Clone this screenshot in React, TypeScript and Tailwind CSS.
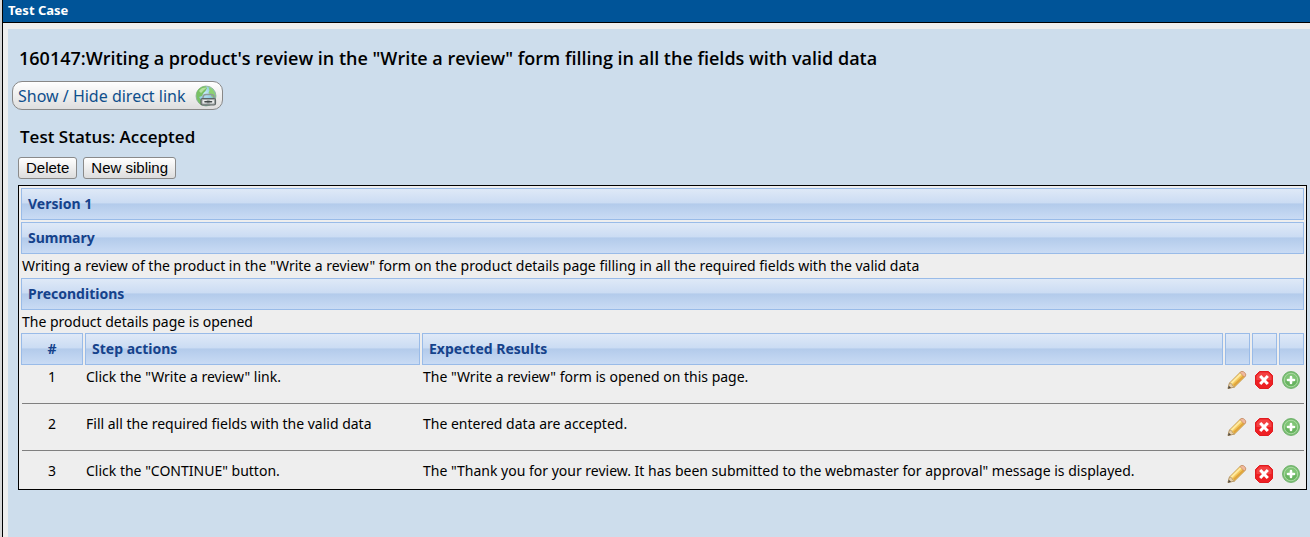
import React from "react";

const steps = [
  { action: 'Click the "Write a review" link.', expected: 'The "Write a review" form is opened on this page.' },
  { action: "Fill all the required fields with the valid data", expected: "The entered data are accepted." },
  {
    action: 'Click the "CONTINUE" button.',
    expected:
      'The "Thank you for your review. It has been submitted to the webmaster for approval" message is displayed.',
  },
];

const band =
  "h-8 border border-[#99bbe8] bg-[linear-gradient(to_bottom,#dfe9f7_0%,#cbdcf3_46%,#b3cbeb_50%,#c9dbf4_100%)] text-[#15428b] text-sm font-bold font-['Noto_Sans',sans-serif]";

function GlobeLinkIcon() {
  return (
    <svg width="22" height="22" viewBox="0 0 22 22" aria-hidden="true">
      <defs>
        <radialGradient id="globe" cx="45%" cy="35%" r="65%">
          <stop offset="0" stopColor="#c9ecf7" />
          <stop offset="0.65" stopColor="#84c4de" />
          <stop offset="1" stopColor="#5b9db4" />
        </radialGradient>
      </defs>
      <circle cx="11" cy="11" r="10" fill="url(#globe)" stroke="#8fb08c" strokeWidth="0.8" />
      <path d="M1.500 9C2 5 5.500 1.500 10.500 1.300L12 3l-1.500 3-2 2-1.500 3-3 1 2 3 .5 5C3.500 18 1 13.500 1.500 9Z" fill="#79c163" />
      <path d="M13.500 2c4 1 7 5 6.800 10l-3.300.5-1.500-3-2-1.500 1-2.500Z" fill="#8ed272" />
      <path d="M4 6c2-3 5-4 8-3.500L9 5 6 8Z" fill="#c4eab0" opacity="0.8" />
      <path d="M8 13.500V12.500a3 3 0 0 1 3-3h5a3 3 0 0 1 3 3v1" fill="none" stroke="#8f9a9a" strokeWidth="1.500" />
      <rect x="6" y="13.500" width="14.500" height="6.500" rx="1.500" fill="#a5abab" stroke="#5d6565" strokeWidth="1.200" />
      <rect x="7.500" y="15" width="4.500" height="3.500" rx="1" fill="#e8eaea" />
      <rect x="14.500" y="15" width="4.500" height="3.500" rx="1" fill="#e8eaea" />
      <path d="M10 16.700h6.500" stroke="#414848" strokeWidth="1.600" strokeLinecap="round" />
    </svg>
  );
}

function PencilIcon() {
  return (
    <svg width="20" height="20" viewBox="0 0 20 20" aria-hidden="true">
      <path d="M1 18.500 2.500 13 13.500 2q1.500-1.200 3.700.6 2.200 1.900 1.100 3.700L7.500 17Z" fill="#f3c75b" stroke="#b98a3a" strokeWidth="0.800" strokeLinejoin="round" />
      <path d="M4 13.500 14 3.800" stroke="#ffeaa0" strokeWidth="2" />
      <path d="M6.800 15.500 17 5.800" stroke="#e0a43c" strokeWidth="1.800" />
      <path d="M13 2.600 14.500 1.500q1.700-.4 3.200 1.100t.9 3l-1.300 1.400Z" fill="#f0b99d" stroke="#c08468" strokeWidth="0.600" />
      <path d="M1 18.500 2.500 13l2.200.7.500 1.700 2.300 1.600Z" fill="#e7cfa8" stroke="#9b8365" strokeWidth="0.500" />
      <path d="m1 18.700.8-3 2.200 2Z" fill="#4b4641" />
    </svg>
  );
}

function DeleteIcon() {
  return (
    <svg width="18" height="18" viewBox="0 0 18 18" aria-hidden="true">
      <path d="M4.500.5h9l4 4v9l-4 4h-9l-4-4v-9Z" fill="#ee2024" stroke="#e01c20" />
      <path d="M5 1.500h8l3.500 3.500v4h-15V5Z" fill="#f65555" opacity="0.65" />
      <path d="m6.200 6 5.600 6m0-6-5.600 6" stroke="#fff" strokeWidth="3" strokeLinecap="square" />
    </svg>
  );
}

function AddIcon() {
  return (
    <svg width="18" height="18" viewBox="0 0 18 18" aria-hidden="true">
      <circle cx="9" cy="9" r="8.500" fill="#7cbf74" stroke="#62a95e" strokeWidth="0.800" />
      <circle cx="9" cy="9" r="6.700" fill="#7fc476" stroke="#b0dba8" strokeWidth="0.900" />
      <path d="M3.200 9.500a5.800 5.800 0 0 0 11.600 0Z" fill="#58aa52" opacity="0.6" />
      <path d="M9 6v6M6 9h6" stroke="#fff" strokeWidth="2.600" strokeLinecap="round" />
    </svg>
  );
}

function ActionCell({ label, children }: { label: string; children: React.ReactNode }) {
  return (
    <td className="p-0 align-middle">
      <button type="button" aria-label={label} className="flex h-[30px] w-6 items-center justify-center">
        {children}
      </button>
    </td>
  );
}

function PlainButton({ children }: { children: React.ReactNode }) {
  return (
    <button
      type="button"
      className="h-[22px] rounded-[3px] border border-[#8a8a8a] bg-linear-to-b from-white to-[#dddddd] px-[7px] font-['Liberation_Sans',sans-serif] text-[15px] leading-5"
    >
      {children}
    </button>
  );
}

export default function App() {
  return (
    <div className="flex min-h-screen bg-[#d8d8d8] pl-[2px] font-['Noto_Sans',sans-serif] text-sm text-black">
      <div className="flex grow flex-col border-l border-black bg-[#eeeeee]">
        <h1 className="h-[23px] border-b border-black bg-[#005498] pl-[5px] text-[13px] leading-5 font-bold text-white">
          Test Case
        </h1>
        <main className="mt-[6px] ml-[5px] grow bg-[#cdddec] pr-[3px] pl-[10px]">
          <h2 className="pt-4 pl-px font-['Open_Sans',sans-serif] text-lg leading-[26px] font-semibold">
            160147:Writing a product's review in the "Write a review" form filling in all the fields with valid data
          </h2>
          <a
            href="#direct-link"
            className="mt-[10px] -ml-[6px] flex h-[29px] w-fit items-center gap-[10px] rounded-[10px] border border-[#888888] bg-linear-to-b from-white to-[#dedede] px-[5px] text-base text-[#0f4f8c]"
          >
            Show / Hide direct link
            <GlobeLinkIcon />
          </a>
          <h3 className="mt-[15px] pl-[2px] font-['Open_Sans',sans-serif] text-[17px] leading-6 font-semibold">
            Test Status: Accepted
          </h3>
          <div className="mt-[8px] flex gap-[6px]">
            <PlainButton>Delete</PlainButton>
            <PlainButton>New sibling</PlainButton>
          </div>
          <section className="mt-[6px] border border-black bg-[#eeeeee]">
            <div className="px-[2px] pt-[2px]">
              <h4 className={band + " pl-[6px] leading-[30px]"}>Version 1</h4>
              <h4 className={band + " mt-[2px] pl-[6px] leading-[30px]"}>Summary</h4>
              <p className="pl-px leading-6">
                Writing a review of the product in the "Write a review" form on the product details page filling in all
                the required fields with the valid data
              </p>
              <h4 className={band + " pl-[6px] leading-[30px]"}>Preconditions</h4>
              <p className="pl-px leading-[23px]">The product details page is opened</p>
            </div>
            <table className="w-full table-fixed border-separate border-spacing-x-[2px] border-spacing-y-0">
              <colgroup>
                <col className="w-[62px]" />
                <col className="w-[335px]" />
                <col />
                <col className="w-[25px]" />
                <col className="w-[25px]" />
                <col className="w-[25px]" />
              </colgroup>
              <thead>
                <tr>
                  <th className={band + " p-0"}>#</th>
                  <th className={band + " p-0 pl-[6px] text-left"}>Step actions</th>
                  <th className={band + " p-0 pl-[6px] text-left"}>Expected Results</th>
                  <th className={band + " p-0"} aria-label="Edit" />
                  <th className={band + " p-0"} aria-label="Delete" />
                  <th className={band + " p-0"} aria-label="Add" />
                </tr>
              </thead>
              <tbody>
                {steps.map((step, i) => (
                  <React.Fragment key={step.action}>
                    {i > 0 && (
                      <tr>
                        <td colSpan={6} className="p-0 pl-px">
                          <hr className="my-2 border-[#808080]" />
                        </td>
                      </tr>
                    )}
                    <tr className="h-[30px] align-top leading-6">
                      <td className="p-0 text-center">{i + 1}</td>
                      <td className="p-0 pl-px">{step.action}</td>
                      <td className="p-0 pl-px">{step.expected}</td>
                      <ActionCell label={`Edit step ${i + 1}`}>
                        <PencilIcon />
                      </ActionCell>
                      <ActionCell label={`Delete step ${i + 1}`}>
                        <DeleteIcon />
                      </ActionCell>
                      <ActionCell label={`Add step after ${i + 1}`}>
                        <AddIcon />
                      </ActionCell>
                    </tr>
                  </React.Fragment>
                ))}
              </tbody>
            </table>
          </section>
        </main>
      </div>
    </div>
  );
}
